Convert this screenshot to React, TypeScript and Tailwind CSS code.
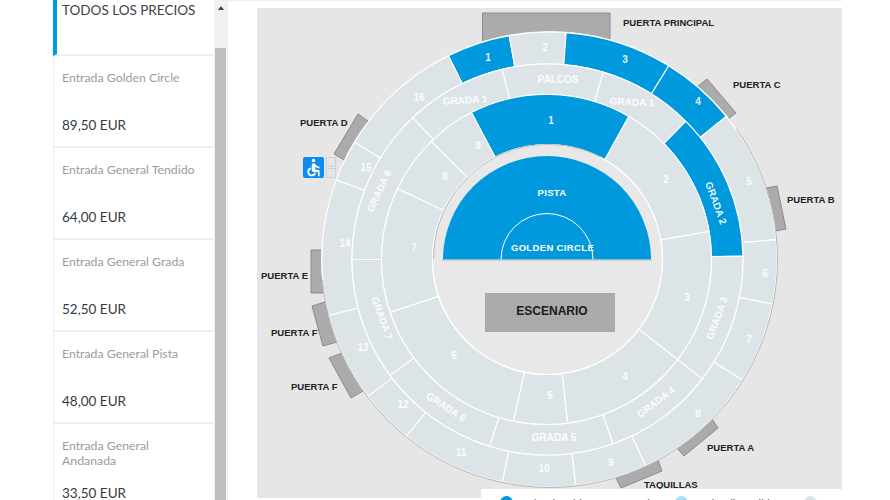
import React from "react";
import { MdAccessible } from "react-icons/md";

const CX = 549.5;
const CY = 259.5;
const BLUE = "#0099dd";
const LIGHT = "#dde4e8";

type Circle = { cx: number; r: number };
const C0: Circle = { cx: 549.5, r: 227.5 };
const C1: Circle = { cx: 547.5, r: 195.5 };
const C2: Circle = { cx: 546.5, r: 165 };
const C3: Circle = { cx: 547.5, r: 115 };

// Where the ray leaving the map centre at angle deg meets circle c.
function hit(c: Circle, deg: number) {
  const a = (deg * Math.PI) / 180;
  const dx = Math.sin(a);
  const dy = -Math.cos(a);
  const ox = CX - c.cx;
  const b = ox * dx;
  const t = -b + Math.sqrt(b * b - (ox * ox - c.r * c.r));
  return `${(CX + t * dx).toFixed(2)} ${(CY + t * dy).toFixed(2)}`;
}

function sector(inner: Circle, outer: Circle, a1: number, a2: number) {
  const large = a2 - a1 > 180 ? 1 : 0;
  return `M${hit(outer, a1)} A${outer.r} ${outer.r} 0 ${large} 1 ${hit(outer, a2)} L${hit(inner, a2)} A${inner.r} ${inner.r} 0 ${large} 0 ${hit(inner, a1)} Z`;
}

function arc(c: Circle, a1: number, a2: number) {
  const large = a2 - a1 > 180 ? 1 : 0;
  return `M${hit(c, a1)} A${c.r} ${c.r} 0 ${large} 1 ${hit(c, a2)}`;
}

const outer: [number, number, boolean][] = [
  [-26.4, -10.2, true],
  [-10.2, 4.2, false],
  [4.2, 31.6, true],
  [31.6, 51, true],
  [51, 85, false],
  [85, 101.3, false],
  [101.3, 122, false],
  [122, 155, false],
  [155, 173.4, false],
  [173.4, 192, false],
  [192, 219, false],
  [219, 233, false],
  [233, 255.8, false],
  [255.8, 290.5, false],
  [290.5, 301, false],
  [301, 333.6, false],
];

const middle: [number, number, boolean][] = [
  [-14, 16, false],
  [16, 44.6, false],
  [44.6, 89, true],
  [89, 128, false],
  [128, 161, false],
  [161, 197.8, false],
  [197.8, 234, false],
  [234, 270, false],
  [270, 316, false],
  [316, 346, false],
];

const inner: [number, number, boolean][] = [
  [-28, 29, true],
  [29, 80, false],
  [80, 128, false],
  [128, 173.7, false],
  [173.7, 192.6, false],
  [192.6, 251.7, false],
  [251.7, 295, false],
  [295, 315, false],
  [315, 332, false],
];

const gates = [
  "482.5,13 610,13 610,48 482.5,48",
  "698,86 707,79 736,113 728,119",
  "766,188 777,186 786,229 775,231",
  "677,448 712,419 718,428 684,456",
  "616,478 658,460 662,471 621,488",
  "334,154 358,114 368,121 344,160",
  "311,250 330,250 330,293 311,293",
  "312,306 325,302 337,342 323,346",
  "329,358 342,353 363,391 351,398",
];

const gateLabels: [string, number, number][] = [
  ["PUERTA PRINCIPAL", 623, 23],
  ["PUERTA C", 733, 85],
  ["PUERTA B", 787, 200],
  ["PUERTA D", 300, 123],
  ["PUERTA E", 261, 276],
  ["PUERTA F", 271, 333],
  ["PUERTA F", 291, 387],
  ["PUERTA A", 707, 448],
  ["TAQUILLAS", 644, 485],
];

const numbers: [string, number, number][] = [
  ["1", 488, 57], ["2", 545, 47], ["3", 625, 59], ["4", 698, 101],
  ["5", 749, 181], ["6", 765, 273], ["7", 749, 339], ["8", 698, 413],
  ["9", 611, 462], ["10", 544, 468], ["11", 461, 452], ["12", 403, 404],
  ["13", 363, 347], ["14", 345, 243], ["15", 366, 167], ["16", 419, 97],
  ["1", 551, 120], ["9", 478, 145], ["8", 445, 176], ["7", 414, 247],
  ["6", 454, 355], ["5", 550, 395], ["4", 625, 376], ["3", 687, 297], ["2", 666, 179],
];

const gradas: [string, number, number, number][] = [
  ["PALCOS", 558, 79, 0],
  ["GRADA 1", 465, 100, -3],
  ["GRADA 1", 632, 102, 3],
  ["GRADA 2", 716, 203, 70],
  ["GRADA 3", 717, 318, -70],
  ["GRADA 4", 656, 402, -37],
  ["GRADA 5", 554, 437, 0],
  ["GRADA 6", 446, 407, 33],
  ["GRADA 7", 382, 318, 70],
  ["GRADA 8", 379, 191, -65],
];

const prices: [string[], string][] = [
  [["Entrada Golden Circle"], "89,50 EUR"],
  [["Entrada General Tendido"], "64,00 EUR"],
  [["Entrada General Grada"], "52,50 EUR"],
  [["Entrada General Pista"], "48,00 EUR"],
  [["Entrada General", "Andanada"], "33,50 EUR"],
];

const arial = { fontFamily: '"Liberation Sans", Arial, sans-serif' };

function VenueMap() {
  return (
    <svg viewBox="257 8 585 490" width={585} height={490} className="block" style={arial}>
      {gates.map((p) => (
        <polygon key={p} points={p} fill="#ababab" stroke="#8b8b8b" strokeWidth={1} />
      ))}
      <circle cx={CX} cy={CY} r={C0.r + 0.5} fill="#e6e6e6" stroke="#efefef" strokeWidth={1} />
      {outer.map(([a, b, on]) => (
        <path key={`o${a}`} d={sector(C1, C0, a, b)} fill={on ? BLUE : LIGHT} stroke="#fff" strokeWidth={1.1} />
      ))}
      {middle.map(([a, b, on]) => (
        <path key={`m${a}`} d={sector(C2, C1, a, b)} fill={on ? BLUE : LIGHT} stroke="#fff" strokeWidth={1.1} />
      ))}
      {inner.map(([a, b, on]) => (
        <path key={`i${a}`} d={sector(C3, C2, a, b)} fill={on ? BLUE : LIGHT} stroke="#fff" strokeWidth={1.1} />
      ))}
      <path d={arc({ cx: CX, r: 228 }, 55, 265)} fill="none" stroke="#a5a5a5" strokeWidth={0.8} />
      <circle cx={C3.cx} cy={CY} r={C3.r} fill="#e8e8e8" stroke="#fff" strokeWidth={1.2} />
      <path d="M433.5 259 A114.5 114.5 0 0 1 600 157" fill="none" stroke="#a8a8a8" strokeWidth={0.8} />
      <path d="M443 259.5 A104 103.5 0 0 1 651 259.5 Z" fill={BLUE} />
      <line x1={442} y1={260} x2={652} y2={260} stroke="#b5b5b5" strokeWidth={1} />
      <path d="M501 259.5 A46 46 0 0 1 593 259.5" fill="none" stroke="#fff" strokeWidth={1} />
      <rect x={485} y={293} width={130} height={39} fill="#ababab" />
      <text x={552} y={315} textAnchor="middle" fontSize={12} fontWeight={700} fill="#1a1a1a">ESCENARIO</text>
      <text x={552} y={196} textAnchor="middle" fontSize={9.5} fontWeight={700} fill="#fff" letterSpacing={0.3}>PISTA</text>
      <text x={552.5} y={251} textAnchor="middle" fontSize={9.5} fontWeight={700} fill="#fff" letterSpacing={0.35}>GOLDEN CIRCLE</text>
      {numbers.map(([t, x, y]) => (
        <text key={`${t}-${x}`} x={x} y={y + 3.5} textAnchor="middle" fontSize={10} fontWeight={700} fill="#fff" fillOpacity={0.9}>{t}</text>
      ))}
      {gradas.map(([t, x, y, r]) => (
        <text
          key={`${t}-${x}`}
          x={x}
          y={y + 3.5}
          textAnchor="middle"
          fontSize={10}
          fontWeight={700}
          fill="#fff"
          fillOpacity={0.92}
          transform={`rotate(${r} ${x} ${y})`}
        >
          {t}
        </text>
      ))}
      {gateLabels.map(([t, x, y]) => (
        <text key={`${t}-${x}`} x={x} y={y + 3.3} fontSize={9.5} fontWeight={700} fill="#222">{t}</text>
      ))}
    </svg>
  );
}

export default function App() {
  return (
    <div className="relative w-[890px] h-[500px] overflow-hidden bg-white flex font-['Lato',sans-serif]">
      <div className="w-[53px] shrink-0" />
      <aside className="w-[161px] shrink-0 flex flex-col border-l border-[#efefef]">
        <div className="h-[56px] shrink-0 border-l-[4px] border-[#0099dd] border-b-2 border-b-[#eeeeee] pl-[5px] pt-[1px] text-[13.5px] leading-[18px] text-[#3b4248] -ml-px">
          TODOS LOS PRECIOS
        </div>
        {prices.map(([lines, price]) => (
          <div key={price} className="h-[92px] shrink-0 border-b-2 border-[#eeeeee] pl-2 flex flex-col">
            <div className="h-[60px] pt-[14px] text-[12.3px] leading-[15px] text-[#9b9b9b]">
              {lines.map((l) => (
                <div key={l}>{l}</div>
              ))}
            </div>
            <div className="text-[13.5px] leading-[18px] text-[#343b41]">{price}</div>
          </div>
        ))}
      </aside>
      <div className="w-[14px] shrink-0 bg-[#f1f1f1] flex flex-col pl-px pr-[2px]">
        <div className="h-[48px] shrink-0 flex justify-center pt-[6px]">
          <div className="w-0 h-0 border-l-[3px] border-r-[3px] border-b-[4px] border-l-transparent border-r-transparent border-b-[#444]" />
        </div>
        <div className="flex-1 bg-[#bfbfbf]" />
      </div>
      <main className="w-[614px] shrink-0 flex flex-col">
        <div className="h-px shrink-0 bg-[#eeeeee]" />
        <div className="pl-[29px] pt-[7px]">
          <div className="relative w-[585px] h-[490px] bg-[#e6e6e6]">
            <VenueMap />
            <div className="absolute left-[46px] top-[149px] w-[21px] h-[21px] rounded-[2px] bg-[#0d8bf0] flex items-center justify-center text-white">
              <MdAccessible size={21} />
            </div>
            <div className="absolute left-[69px] top-[149px] w-[10px] h-[10px] bg-[#e4e7e7] border border-[#d0d0d0]" />
            <div className="absolute left-[69px] top-[160px] w-[10px] h-[10px] bg-[#e4e7e7] border border-[#d0d0d0]" />
            <div className="absolute left-[224px] top-[481px] w-[361px] h-[20px] bg-white text-[11px] leading-[14px] text-[#666]">
              <span className="absolute left-[19px] top-[7px] w-[13px] h-[13px] rounded-full bg-[#0099dd]" />
              <span className="absolute left-[41px] top-[8px]">Seleccionable</span>
              <span className="absolute left-[134px] top-[8px]">Agotado</span>
              <span className="absolute left-[194px] top-[7px] w-[13px] h-[13px] rounded-full bg-[#a9dff3]" />
              <span className="absolute left-[216px] top-[8px]">Tarifa disponible</span>
              <span className="absolute left-[323px] top-[7px] w-[13px] h-[13px] rounded-full bg-[#dde4e8]" />
              <span className="absolute left-[345px] top-[8px]">No</span>
            </div>
          </div>
        </div>
      </main>
    </div>
  );
}
